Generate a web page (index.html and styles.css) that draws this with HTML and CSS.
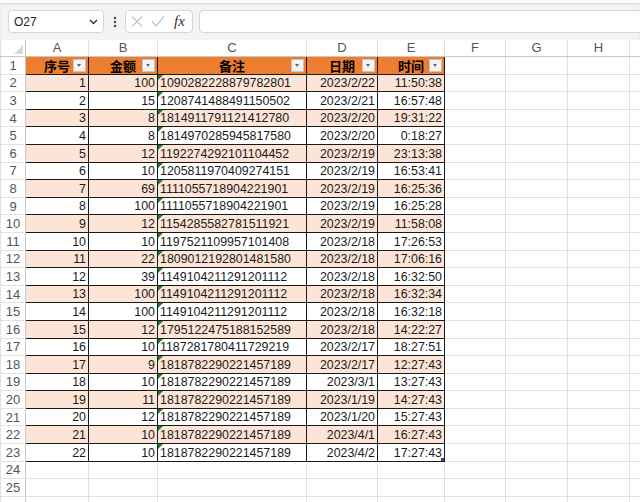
FILE: index.html
```html
<!DOCTYPE html>
<html lang="zh-CN">
<head>
    <meta charset="UTF-8">
    <meta name="viewport" content="width=device-width, initial-scale=1.0">
    <title>Sheet1</title>
    <link rel="stylesheet" href="styles.css">
</head>
<body>

<div class="toolbar">
    <div class="namebox">
        <span>O27</span>
        <svg class="chevron" width="9" height="6" viewBox="0 0 9 6"><path d="M1 1l3.5 3.5L8 1" fill="none" stroke="#333" stroke-width="1.4"/></svg>
    </div>
    <div class="dots">
        <svg width="4" height="12" viewBox="0 0 4 12"><circle cx="2" cy="2" r="1.2" fill="#444"/><circle cx="2" cy="6" r="1.2" fill="#444"/><circle cx="2" cy="10" r="1.2" fill="#444"/></svg>
    </div>
    <div class="fxbox">
        <svg width="12" height="11" viewBox="0 0 12 11"><path d="M1 0.5l10 10M11 0.5l-10 10" stroke="#c4c4c4" stroke-width="1.2"/></svg>
        <svg width="14" height="11" viewBox="0 0 14 11"><path d="M1 5.5l4 4.5L13 0.5" fill="none" stroke="#c4c4c4" stroke-width="1.2"/></svg>
        <span class="fx">fx</span>
    </div>
    <div class="formula"></div>
</div>

<table class="sheet">
    <colgroup>
        <col style="width:25px"><col style="width:63px"><col style="width:69px"><col style="width:149px">
        <col style="width:71px"><col style="width:67px"><col style="width:61px"><col style="width:62px">
        <col style="width:62px"><col style="width:64px">
    </colgroup>
    <thead>
        <tr>
            <th class="corner"></th>
            <th>A</th><th>B</th><th>C</th><th>D</th><th>E</th><th>F</th><th>G</th><th>H</th><th></th>
        </tr>
    </thead>
    <tbody id="sheetBody">
        <!-- rows are built below -->
    </tbody>
</table>

<script>
// 序号, 金额, 备注, 日期, 时间
const rows = [
    [1, 100, "1090282228879782801", "2023/2/22", "11:50:38"],
    [2, 15, "1208741488491150502", "2023/2/21", "16:57:48"],
    [3, 8, "1814911791121412780", "2023/2/20", "19:31:22"],
    [4, 8, "1814970285945817580", "2023/2/20", "0:18:27"],
    [5, 12, "1192274292101104452", "2023/2/19", "23:13:38"],
    [6, 10, "1205811970409274151", "2023/2/19", "16:53:41"],
    [7, 69, "1111055718904221901", "2023/2/19", "16:25:36"],
    [8, 100, "1111055718904221901", "2023/2/19", "16:25:28"],
    [9, 12, "1154285582781511921", "2023/2/19", "11:58:08"],
    [10, 10, "1197521109957101408", "2023/2/18", "17:26:53"],
    [11, 22, "1809012192801481580", "2023/2/18", "17:06:16"],
    [12, 39, "1149104211291201112", "2023/2/18", "16:32:50"],
    [13, 100, "1149104211291201112", "2023/2/18", "16:32:34"],
    [14, 100, "1149104211291201112", "2023/2/18", "16:32:18"],
    [15, 12, "1795122475188152589", "2023/2/18", "14:22:27"],
    [16, 10, "1187281780411729219", "2023/2/17", "18:27:51"],
    [17, 9, "1818782290221457189", "2023/2/17", "12:27:43"],
    [18, 10, "1818782290221457189", "2023/3/1", "13:27:43"],
    [19, 11, "1818782290221457189", "2023/1/19", "14:27:43"],
    [20, 12, "1818782290221457189", "2023/1/20", "15:27:43"],
    [21, 10, "1818782290221457189", "2023/4/1", "16:27:43"],
    [22, 10, "1818782290221457189", "2023/4/2", "17:27:43"]
];

const headers = ["序号", "金额", "备注", "日期", "时间"];
const blanks = '<td></td><td></td><td></td><td></td>';

function buildSheet() {
    const body = document.getElementById("sheetBody");
    let html = '<tr><td class="rh">1</td>';
    headers.forEach(h => {
        html += `<td class="t head">${h}<span class="filter"></span></td>`;
    });
    html += blanks + '</tr>';

    rows.forEach((r, i) => {
        const last = i === rows.length - 1 ? ' corner-mark' : '';
        html += `
            <tr class="${r[0] % 2 ? 'band' : ''}">
                <td class="rh">${i + 2}</td>
                <td class="t num">${r[0]}</td>
                <td class="t num">${r[1]}</td>
                <td class="t txt">${r[2]}</td>
                <td class="t num">${r[3]}</td>
                <td class="t num${last}">${r[4]}</td>
                ${blanks}
            </tr>`;
    });

    // rows 24, 25 and the top of the next one
    ["24", "25", ""].forEach(n => {
        html += `<tr><td class="rh">${n}</td><td></td><td></td><td></td><td></td><td></td>${blanks}</tr>`;
    });
    body.innerHTML = html;
}

buildSheet();
</script>

</body>
</html>
```

FILE: styles.css
```css
body {
    margin: 0;
    background-color: #fff;
    overflow: hidden;
    font-family: "Liberation Sans", Arial, sans-serif;
}
.toolbar {
    display: flex;
    align-items: center;
    height: 40px;
    box-sizing: border-box;
    padding: 7px 0 7px 8px;
    border-top: 3px solid #fff;
    background-color: #f3f3f3;
    box-shadow: inset 0 1px 2px rgba(0, 0, 0, 0.12);
}
.namebox, .fxbox, .formula {
    height: 23px;
    box-sizing: border-box;
    background-color: #fff;
    border: 1px solid #d6d6d6;
    border-radius: 4px;
}
.namebox {
    width: 96px;
    display: flex;
    align-items: center;
    justify-content: space-between;
    padding: 0 5px 0 5px;
    font-size: 12px;
    color: #222;
}
.dots {
    width: 21px;
    display: flex;
    justify-content: center;
}
.fxbox {
    width: 68px;
    display: flex;
    align-items: center;
    gap: 8px;
    padding-left: 5px;
}
.fx {
    font-family: "Liberation Serif", "DejaVu Serif", serif;
    font-style: italic;
    font-size: 15px;
    color: #333;
    margin-left: 1px;
}
.formula {
    flex: 1;
    margin-left: 6px;
    margin-right: -6px;
}
.sheet {
    border-collapse: collapse;
    table-layout: fixed;
    width: 654px;
    font-size: 12.4px;
    color: #1a1a1a;
}
.sheet th, .sheet td {
    border: 1px solid #e1e1e1;
    padding: 0 2px;
    white-space: nowrap;
    overflow: hidden;
}
.sheet th {
    height: 16px;
    font-weight: normal;
    font-size: 13px;
    color: #555;
    background-color: #fff;
    border-top: none;
    border-bottom-color: #c9c9c9;
    line-height: 16px;
}
.sheet th.corner {
    position: relative;
    border-right-color: #c9c9c9;
}
.sheet th.corner::after {
    content: "";
    position: absolute;
    right: 2px;
    bottom: 2px;
    border-style: solid;
    border-width: 0 0 9px 9px;
    border-color: transparent transparent #d9d9d9 transparent;
}
.sheet td {
    height: 16.6px;
    line-height: 15px;
    vertical-align: bottom;
}
.sheet td.rh {
    text-align: center;
    font-size: 13px;
    color: #555;
    border-right-color: #c9c9c9;
    vertical-align: middle;
}
.sheet td.t {
    border-color: #1a1a1a;
}
.band td.t {
    background-color: #fce4d6;
}
.sheet td.head {
    position: relative;
    background-color: #ed7d31;
    text-align: center;
    font-family: "Noto Sans CJK SC", sans-serif;
    font-weight: bold;
    font-size: 13px;
    color: #000;
    vertical-align: middle;
}
.filter {
    position: absolute;
    right: 2px;
    top: 2px;
    width: 13px;
    height: 13px;
    box-sizing: border-box;
    background-color: #f4f4f4;
    border: 1px solid #c4c4c4;
}
.filter::after {
    content: "";
    position: absolute;
    left: 3px;
    top: 4px;
    border-style: solid;
    border-width: 3px 2.5px 0 2.5px;
    border-color: #666 transparent transparent transparent;
}
.num {
    text-align: right;
}
.txt {
    position: relative;
    text-align: left;
    padding-left: 3px;
}
.txt::before {
    content: "";
    position: absolute;
    left: 0;
    top: 0;
    border-style: solid;
    border-width: 5px 5px 0 0;
    border-color: #1d7d1d transparent transparent transparent;
}
.corner-mark {
    position: relative;
}
.corner-mark::after {
    content: "";
    position: absolute;
    right: -1px;
    bottom: -1px;
    width: 4px;
    height: 4px;
    background-color: #2b4c9a;
}
```
